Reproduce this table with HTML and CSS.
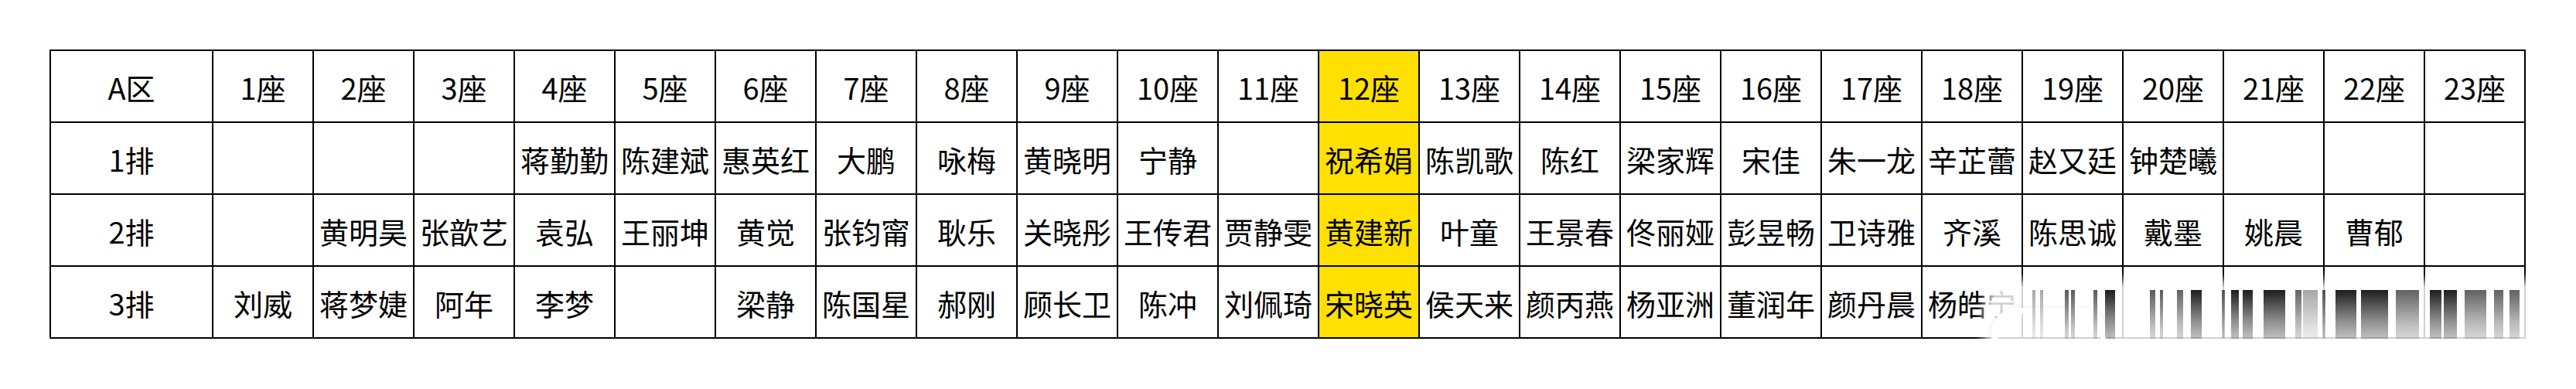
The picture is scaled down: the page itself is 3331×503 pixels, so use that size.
FILE: index.html
```html
<!DOCTYPE html>
<html lang="zh-CN">
<head>
<meta charset="utf-8">
<title>A区 座位表</title>
<link rel="stylesheet" href="styles.css">
</head>
<body>
<div class="page">
  <div class="sheet">
    <div class="grid">
      <div class="cell">A区</div>
      <div class="cell">1座</div><div class="cell">2座</div><div class="cell">3座</div><div class="cell">4座</div><div class="cell">5座</div><div class="cell">6座</div><div class="cell">7座</div><div class="cell">8座</div><div class="cell">9座</div><div class="cell">10座</div><div class="cell">11座</div><div class="cell hl">12座</div><div class="cell">13座</div><div class="cell">14座</div><div class="cell">15座</div><div class="cell">16座</div><div class="cell">17座</div><div class="cell">18座</div><div class="cell">19座</div><div class="cell">20座</div><div class="cell">21座</div><div class="cell">22座</div><div class="cell">23座</div>

      <div class="cell">1排</div>
      <div class="cell"></div><div class="cell"></div><div class="cell"></div><div class="cell">蒋勤勤</div><div class="cell">陈建斌</div><div class="cell">惠英红</div><div class="cell">大鹏</div><div class="cell">咏梅</div><div class="cell">黄晓明</div><div class="cell">宁静</div><div class="cell"></div><div class="cell hl">祝希娟</div><div class="cell">陈凯歌</div><div class="cell">陈红</div><div class="cell">梁家辉</div><div class="cell">宋佳</div><div class="cell">朱一龙</div><div class="cell">辛芷蕾</div><div class="cell">赵又廷</div><div class="cell">钟楚曦</div><div class="cell"></div><div class="cell"></div><div class="cell"></div>

      <div class="cell">2排</div>
      <div class="cell"></div><div class="cell">黄明昊</div><div class="cell">张歆艺</div><div class="cell">袁弘</div><div class="cell">王丽坤</div><div class="cell">黄觉</div><div class="cell">张钧甯</div><div class="cell">耿乐</div><div class="cell">关晓彤</div><div class="cell">王传君</div><div class="cell">贾静雯</div><div class="cell hl">黄建新</div><div class="cell">叶童</div><div class="cell">王景春</div><div class="cell">佟丽娅</div><div class="cell">彭昱畅</div><div class="cell">卫诗雅</div><div class="cell">齐溪</div><div class="cell">陈思诚</div><div class="cell">戴墨</div><div class="cell">姚晨</div><div class="cell">曹郁</div><div class="cell"></div>

      <div class="cell">3排</div>
      <div class="cell">刘威</div><div class="cell">蒋梦婕</div><div class="cell">阿年</div><div class="cell">李梦</div><div class="cell"></div><div class="cell">梁静</div><div class="cell">陈国星</div><div class="cell">郝刚</div><div class="cell">顾长卫</div><div class="cell">陈冲</div><div class="cell">刘佩琦</div><div class="cell hl">宋晓英</div><div class="cell">侯天来</div><div class="cell">颜丙燕</div><div class="cell">杨亚洲</div><div class="cell">董润年</div><div class="cell">颜丹晨</div><div class="cell">杨皓宁</div><div class="cell"></div><div class="cell"></div><div class="cell"></div><div class="cell"></div><div class="cell"></div>
    </div>

    <div class="wm" aria-hidden="true">
      <span class="ring"></span>
      <span class="bar light" style="left:55px;width:4px"></span>
      <span class="bar light" style="left:65px;width:4px"></span>
      <span class="bar thin" style="left:97px;width:5px"></span>
      <span class="bar thin" style="left:105px;width:5px"></span>
      <span class="bar thin" style="left:134px;width:5px"></span>
      <span class="bar dark" style="left:149px;width:13px"></span>
      <span class="bar thin" style="left:207px;width:7px"></span>
      <span class="bar thin" style="left:220px;width:4px"></span>
      <span class="bar mid" style="left:242px;width:8px"></span>
      <span class="bar dark" style="left:260px;width:14px"></span>
      <span class="bar thin" style="left:300px;width:4px"></span>
      <span class="bar dark" style="left:312px;width:10px"></span>
      <span class="bar dark" style="left:327px;width:13px"></span>
      <span class="bar dark" style="left:354px;width:28px"></span>
      <span class="bar mid" style="left:395px;width:8px"></span>
      <span class="bar light" style="left:405px;width:19px"></span>
      <span class="bar thin" style="left:430px;width:4px"></span>
      <span class="bar dark" style="left:447px;width:27px"></span>
      <span class="bar dark" style="left:480px;width:35px"></span>
      <span class="bar mid" style="left:525px;width:30px"></span>
      <span class="bar dark" style="left:569px;width:15px"></span>
      <span class="bar dark" style="left:587px;width:17px"></span>
      <span class="bar mid" style="left:614px;width:28px"></span>
      <span class="bar mid" style="left:652px;width:12px"></span>
      <span class="bar mid" style="left:672px;width:13px"></span>
    </div>
  </div>
</div>
</body>
</html>
```

FILE: styles.css
```css
html, body {
  margin: 0;
  padding: 0;
  background: #ffffff;
}

.page {
  padding: 64px 0 0 64px;
}

.sheet {
  position: relative;
  width: 3202px;
}

.grid {
  display: grid;
  grid-template-columns: 210px repeat(23, 130px);
  grid-auto-rows: 93px;
  border-left: 2px solid #000;
  border-top: 2px solid #000;
  font-family: "Noto Sans CJK SC", "Noto Sans", sans-serif;
  font-size: 38px;
  color: #000;
}

.cell {
  display: flex;
  align-items: center;
  justify-content: center;
  border-right: 2px solid #000;
  border-bottom: 2px solid #000;
  padding-top: 3px;
  box-sizing: border-box;
  white-space: nowrap;
  overflow: visible;
  line-height: 1;
}

.hl {
  background: #ffe000;
}

/* smeared watermark lying over the bottom-right corner */
.wm {
  position: absolute;
  left: 2509px;
  top: 306px;
  width: 730px;
  height: 97px;
  background: rgba(255, 255, 255, 0.82);
  border-radius: 28px;
  box-shadow: 0 0 14px 8px rgba(255, 255, 255, 0.8);
}

.ring {
  position: absolute;
  left: 2px;
  top: 28px;
  width: 150px;
  height: 66px;
  border: 8px solid #fff;
  border-radius: 40px;
  box-shadow: 0 2px 8px rgba(0, 0, 0, 0.12);
  box-sizing: border-box;
}

.bar {
  position: absolute;
  top: 5px;
  height: 84px;
  border-radius: 0 0 4px 4px;
}

.bar.dark {
  background: linear-gradient(to bottom, rgba(10, 10, 10, 0.92) 0%, rgba(40, 40, 40, 0.55) 45%, rgba(120, 120, 120, 0.1) 100%);
}

.bar.mid {
  background: linear-gradient(to bottom, rgba(30, 30, 30, 0.7) 0%, rgba(80, 80, 80, 0.4) 50%, rgba(150, 150, 150, 0.08) 100%);
}

.bar.thin {
  background: linear-gradient(to bottom, rgba(20, 20, 20, 0.7) 0%, rgba(90, 90, 90, 0.35) 60%, rgba(160, 160, 160, 0.1) 100%);
}

.bar.light {
  background: linear-gradient(to bottom, rgba(60, 60, 60, 0.45) 0%, rgba(140, 140, 140, 0.25) 60%, rgba(200, 200, 200, 0.08) 100%);
}
```
